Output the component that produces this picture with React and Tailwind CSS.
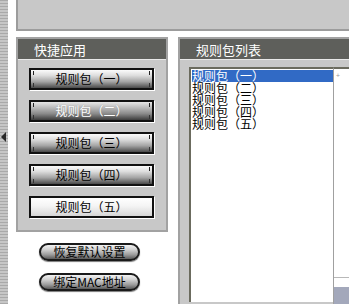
import React from "react";

const btnBase =
  "relative h-[22px] w-[125px] ml-[11px] flex items-center justify-center text-[12px] leading-none border-2 border-[#111] shadow-[1px_1px_0_#fff]";

function Ticks() {
  return (
    <>
      <span className="absolute left-[2px] top-[1px] h-[4px] w-[1px] bg-[#222]" />
      <span className="absolute right-[2px] top-[1px] h-[4px] w-[1px] bg-[#222]" />
      <span className="absolute left-[2px] bottom-[1px] h-[4px] w-[1px] bg-[#333]" />
      <span className="absolute right-[2px] bottom-[1px] h-[4px] w-[1px] bg-[#333]" />
    </>
  );
}

function MetalButton({ label, variant }) {
  if (variant === "dark") {
    return (
      <div
        className={`${btnBase} text-white bg-[linear-gradient(180deg,#e6e6e6_0%,#bdbdbd_30%,#8a8a8a_65%,#3c3c3c_100%)]`}
      >
        <Ticks />
        <span className="[text-shadow:0_0_1px_#888]">{label}</span>
      </div>
    );
  }
  if (variant === "light") {
    return (
      <div
        className={`${btnBase} text-black bg-[linear-gradient(180deg,#ffffff_0%,#f4f4f4_45%,#d6d6d6_100%)]`}
      >
        <span>{label}</span>
      </div>
    );
  }
  return (
    <div
      className={`${btnBase} text-black bg-[linear-gradient(180deg,#fbfbfb_0%,#dedede_30%,#a4a4a4_65%,#4a4a4a_100%)]`}
    >
      <Ticks />
      <span>{label}</span>
    </div>
  );
}

function Pill({ label }) {
  return (
    <div className="ml-[23px] h-[18px] w-[101px] rounded-full border-2 border-[#1a1a1a] bg-[linear-gradient(180deg,#f2f2f2_0%,#cfcfcf_35%,#9a9a9a_70%,#5a5a5a_100%)] shadow-[0_1px_1px_#777] flex items-center justify-center text-[12px] leading-none text-black">
      {label}
    </div>
  );
}

export default function App() {
  const items = ["规则包（一）", "规则包（二）", "规则包（三）", "规则包（四）", "规则包（五）"];
  return (
    <div className="flex h-[304px] w-[349px] overflow-hidden bg-white font-['Noto_Sans_CJK_SC','Noto_Sans',sans-serif]">
      {/* left striped strip */}
      <div className="h-full w-[8px] shrink-0 bg-[image:repeating-linear-gradient(180deg,#a9a9a9_0px,#a9a9a9_1px,#c6c6c6_1px,#c6c6c6_3px)] flex flex-col">
        <div className="mt-[132px] ml-[1px] h-0 w-0 border-y-[5px] border-y-transparent border-r-[5px] border-r-[#2a2a2a]" />
      </div>
      <div className="w-[8px] shrink-0" />

      <div className="flex min-w-0 flex-1 flex-col">
        {/* top box */}
        <div className="h-[31px] shrink-0 border-l-2 border-b-2 border-[#9c9c9c] bg-[#c8c8c8]" />

        <div className="mt-[6px] flex min-h-0 flex-1 gap-[10px]">
          {/* left column */}
          <div className="flex w-[152px] shrink-0 flex-col">
            <div className="flex h-[195px] flex-col border-2 border-[#a2a2a2] bg-[#c8c8c8]">
              <div className="flex h-[20px] items-center bg-[#5e5f5b] pl-[16px] text-[13px] leading-none text-white">
                快捷应用
              </div>
              <div className="h-[1px] bg-[#e8e8e8]" />
              <div className="flex flex-col gap-[10px] pt-[8px]">
                <MetalButton label="规则包（一）" />
                <MetalButton label="规则包（二）" variant="dark" />
                <MetalButton label="规则包（三）" />
                <MetalButton label="规则包（四）" />
                <MetalButton label="规则包（五）" variant="light" />
              </div>
            </div>
            <div className="mt-[11px] flex flex-col gap-[12px]">
              <Pill label="恢复默认设置" />
              <Pill label="绑定MAC地址" />
            </div>
          </div>

          {/* right panel */}
          <div className="flex min-w-0 flex-1 flex-col border-l-2 border-t-2 border-[#a2a2a2] bg-[#c8c8c8]">
            <div className="flex h-[20px] shrink-0 items-center bg-[#5e5f5b] pl-[16px] text-[13px] leading-none text-white">
              规则包列表
            </div>
            <div className="h-[1px] shrink-0 bg-[#e8e8e8]" />
            <div className="ml-[9px] mt-[7px] flex min-h-0 flex-1">
              <div className="mb-[2px] flex min-w-0 flex-1 flex-col border-l-2 border-t-2 border-[#6b6b5e] bg-white">
                <div className="pl-[1px] pt-[1px] text-[12px] leading-[12px] text-black">
                  {items.map((t, i) => (
                    <div
                      key={t}
                      className={
                        i === 0
                          ? "h-[12px] whitespace-nowrap bg-[#316ac5] text-white"
                          : "h-[12px] whitespace-nowrap"
                      }
                    >
                      {t}
                    </div>
                  ))}
                </div>
              </div>
              <div className="flex w-[16px] shrink-0 flex-col border-l border-t-2 border-[#a0a0a0] border-t-[#6b6b5e] bg-white">
                <div className="ml-[2px] mt-[3px] text-[7px] leading-none text-[#999]">+</div>
                <div className="flex-1" />
                <div className="h-[10px] border-t border-[#b8b8b8]" />
                <div className="h-[17px] bg-[#a3a8bb]" />
              </div>
            </div>
          </div>
        </div>
      </div>
    </div>
  );
}
